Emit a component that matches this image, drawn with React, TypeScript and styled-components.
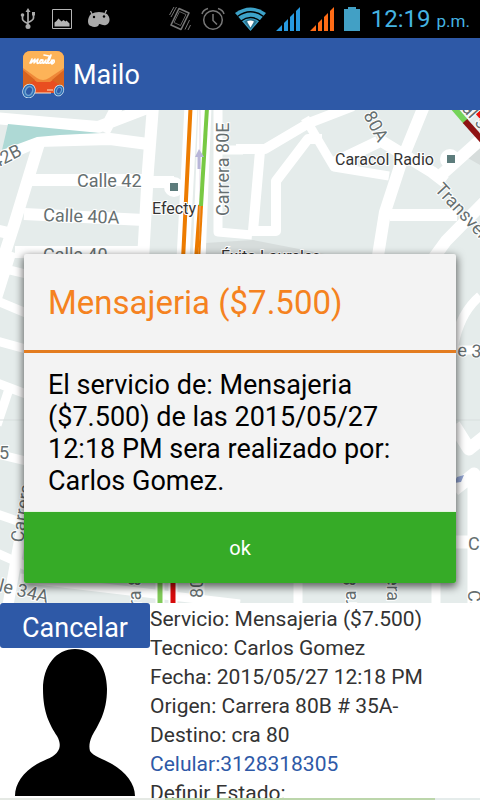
import React from "react";
import styled, { createGlobalStyle } from "styled-components";

const GlobalStyle = createGlobalStyle`
  * { box-sizing: border-box; }
  body { margin: 0; font-family: Roboto, sans-serif; background: #fff; }
  p, h1, h2 { margin: 0; }
`;

const Screen = styled.div`
  position: relative;
  display: flex;
  flex-direction: column;
  height: 100vh;
  overflow: hidden;
`;

const StatusBar = styled.header`
  display: flex;
  align-items: center;
  justify-content: space-between;
  flex: 0 0 38px;
  padding: 0 10px 0 20px;
  background: #000;
`;

const StatusGroup = styled.div<{ $gap: number }>`
  display: flex;
  align-items: center;
  gap: ${(p) => p.$gap}px;
`;

const Clock = styled.time`
  padding: 2px 0 0 1px;
  color: #45b4e2;
  font-size: 24px;
  line-height: 32px;
`;

const Meridiem = styled.span`
  margin-left: 6px;
  font-size: 17px;
`;

const AppBar = styled.div`
  display: flex;
  align-items: center;
  gap: 8px;
  flex: 0 0 72px;
  padding: 0 22px;
  background: #2e59a7;
  color: #fff;
`;

const AppTitle = styled.h1`
  padding-top: 2px;
  font-size: 27px;
  line-height: 36px;
  font-weight: 400;
`;

const Content = styled.main`
  position: relative;
  display: flex;
  flex: 1;
  flex-direction: column;
  justify-content: flex-end;
  min-height: 0;
  padding-bottom: 2px;
`;

const MapCanvas = styled.svg`
  position: absolute;
  inset: 0;
  width: 100%;
  height: 100%;
`;

const ServicePanel = styled.section`
  position: relative;
  display: flex;
  height: 195px;
  overflow: hidden;
  background: #fff;
`;

const TechnicianColumn = styled.div`
  display: flex;
  flex-direction: column;
  align-items: center;
  width: 150px;
`;

const CancelButton = styled.button`
  width: 100%;
  height: 45px;
  padding: 4px 0 0;
  border: 0;
  border-radius: 3px;
  background: #2e59a7;
  color: #fff;
  font: 400 27px/40px Roboto, sans-serif;
`;

const Details = styled.div`
  flex: 1;
  padding-top: 2px;
  color: #333;
  font-size: 21px;
  line-height: 29px;
  white-space: nowrap;
`;

const PhoneLink = styled.a`
  display: block;
  color: #2e59a7;
  text-decoration: none;
`;

const Overlay = styled.div`
  position: absolute;
  inset: 38px 0 0;
  display: flex;
  align-items: center;
  padding: 0 24px 1px;
`;

const Dialog = styled.section`
  width: 100%;
  border-radius: 2px;
  background: #f3f3f3;
  box-shadow: 0 3px 8px 1px rgba(0, 0, 0, 0.6);
  overflow: hidden;
`;

const DialogTitle = styled.h2`
  padding: 24px 24px 22px;
  border-bottom: 3px solid #e37c20;
  color: #f58220;
  font-size: 33px;
  line-height: 50px;
  font-weight: 400;
`;

const DialogText = styled.p`
  padding: 16px 24px 14px;
  color: #000;
  font-size: 27px;
  line-height: 32px;
`;

const OkButton = styled.button`
  display: block;
  width: 100%;
  height: 72px;
  border: 0;
  border-top: 1px solid #e6f5e0;
  background: #36ab27;
  color: #fff;
  font: 400 20px/24px Roboto, sans-serif;
`;

const UsbIcon = () => (
  <svg width="16" height="22" viewBox="0 0 16 22" fill="none" stroke="#aaa" strokeWidth="1.7">
    <path d="M8 3v15M2.500 7v4q0 2 5.500 4.500M13.500 6v4q0 2-5.500 4.500" />
    <path d="M8 0l2.500 4h-5z" fill="#aaa" stroke="none" />
    <circle cx="2.500" cy="7" r="1.800" fill="#aaa" stroke="none" />
    <path d="M12 4h3v3.500h-3z" fill="#aaa" stroke="none" />
    <circle cx="8" cy="18.500" r="2.500" fill="#aaa" stroke="none" />
  </svg>
);

const PictureIcon = () => (
  <svg width="20" height="20" viewBox="0 0 20 20">
    <path d="M.5.5h19v19H.5z" fill="none" stroke="#b5b5b5" />
    <path d="M2.500 17.500v-4l2-1.500 2-2.500 3 3 2-1.500 2 1.500 1-1 3 3v3z" fill="#b5b5b5" />
  </svg>
);

const DroidIcon = () => (
  <svg width="22" height="18" viewBox="0 0 22 18">
    <path d="M4 4L2.500 1M17 3.500L18.500 0" stroke="#aaa" strokeWidth="1.300" />
    <path d="M3 4q8-4 16 0c4 4 3 10-1 11-3 1-4-1-7-1 0 3-5 4-8 2C-1 15-1 8 3 4z" fill="#aaa" />
    <circle cx="6" cy="7" r="1.200" />
    <circle cx="16" cy="6.500" r="1.200" />
  </svg>
);

const VibrateIcon = () => (
  <svg width="22" height="26" viewBox="0 0 22 26" fill="none" stroke="#777">
    <path d="M10 2.500L20 7 12 23.500 2 19z" strokeWidth="1.600" strokeLinejoin="round" />
    <path d="M10.500 5.500L17 8.500 11.500 19.500 5 16.500z" strokeWidth=".8" />
    <path d="M5 1L.5 9M7.500 1L2 11M20.500 14L16 23.500M21.500 19L19 24" />
  </svg>
);

const AlarmIcon = () => (
  <svg width="24" height="24" viewBox="0 0 24 24" fill="none" stroke="#777" strokeWidth="1.500">
    <circle cx="12" cy="13" r="9.300" />
    <path d="M12 7v6.500l4 4M1 7q1-4 6-5.500M23 7q-1-4-6-5.500" />
  </svg>
);

const WifiIcon = () => (
  <svg width="31" height="24" viewBox="0 0 31 24">
    <path d="M0 6Q15.500-5 31 6L15.500 24z" fill="#3da2c8" />
    <path d="M2.500 9.500q13-9.500 26 0M6 14q9.500-7 19 0" fill="none" stroke="#000" strokeWidth="1.500" />
    <path d="M9 14.500q6.500-5 13 0l-6.500 8z" fill="#2b738f" />
    <path d="M12 14.500q3.500-2 7 0l-3.500 6z" fill="#fff" />
  </svg>
);

const SignalIcon = ({ color }: { color: string }) => (
  <svg width="24" height="24" viewBox="0 0 24 24" fill={color}>
    <path d="M0 24l6-6v6zM8 16l4-4v12H8zM14 10l4-4v18h-4zM20 4l4-4v24h-4z" />
  </svg>
);

const BatteryIcon = () => (
  <svg width="16" height="24" viewBox="0 0 16 24" fill="#42a0c5">
    <path d="M4 0h8v2h4v22H0V2h4z" />
  </svg>
);

const MailoLogo = () => (
  <svg width="43" height="48" viewBox="0 0 43 48">
    <rect x="1" y="1" width="41" height="42" rx="7" fill="#ef8737" />
    <path d="M1 22l14 10h13l14-10v14q0 7-7 7H8q-7 0-7-7z" fill="#e94e20" />
    <path d="M1 20l12 10L1 38zM42 20L30 30l12 8z" fill="#d9641f" />
    <path d="M1 18V9q0-8 8-8h25q8 0 8 8v9L27 28q-6 4-12 0z" fill="#fdb358" />
    <g fill="none" stroke="#fff" strokeWidth="1.600" strokeLinecap="round" strokeLinejoin="round">
      <path d="M8 13l2-4-1 4 4-4-1 4 4-4-1 4q1 1 3-1 0-3 3-2-4 0-3 3 2 1 3-3-1 4 1 3l2-3q-1 4 1 3 3-3 4-8-4 4-3 8 2 1 4-3-2 3 0 4 3-1 2-4-2 0-2 3" />
      <path d="M22 5l5 1" />
    </g>
    <path d="M13 43h16M25 40h6" stroke="#ffe3c5" />
    <g fill="#6fa3d0" stroke="#2d6fb4" strokeWidth="1.500">
      <ellipse cx="7" cy="41" rx="5" ry="6" stroke="#d6e7f2" strokeWidth="3" transform="rotate(25 7 41)" />
      <ellipse cx="7" cy="41" rx="5" ry="6" transform="rotate(25 7 41)" />
      <ellipse cx="37" cy="40.500" rx="3.500" ry="4.500" stroke="#d6e7f2" strokeWidth="3" transform="rotate(25 37 40.5)" />
      <ellipse cx="37" cy="40.500" rx="3.500" ry="4.500" transform="rotate(25 37 40.5)" />
    </g>
    <ellipse cx="7" cy="41" rx="2.700" ry="3.800" fill="#2e59a7" transform="rotate(25 7 41)" />
    <ellipse cx="37" cy="40.500" rx="1.800" ry="2.800" fill="#2e59a7" transform="rotate(25 37 40.5)" />
  </svg>
);

const Silhouette = () => (
  <svg width="122" height="148" viewBox="0 0 122 148" role="img" aria-label="Tecnico">
    <path d="M61 1C42 1 29 18 29 41c0 24 7 36 14 47 4 7 3 12 1 15-3 6-12 8-21 13C9 124 1 136 1 148h120c0-12-9-24-23-32-9-5-19-8-22-13-1-4-1-8 2-15 6-11 15-23 15-47C93 18 80 1 61 1z" />
  </svg>
);

const CityMap = () => (
  <MapCanvas viewBox="0 110 480 690" preserveAspectRatio="xMidYMid slice" role="img" aria-label="Mapa">
    <rect y="110" width="480" height="690" fill="#e5eceb" />
    <path d="M205 243l48-3 77 15v7H205zM466 157l14-10v18z" fill="#d7dddc" />
    <g fill="none" stroke="#fff" strokeWidth="12" strokeLinejoin="round">
      <path d="M-5 118L50 123l48 4 52-20M104 132l14-27" />
      <path d="M-5 160L38 141 110 139 148 144" />
      <path d="M40 140L14 225 2 262-5 290" />
      <path d="M153 106L148 170 143 260" />
      <path d="M30 180h115M24 214l120 6M15 252h130M150 182h24" />
      <path d="M-5 230l18 4" />
      <path d="M218 106v126l34 3M219 150h24" strokeWidth="9" />
      <path d="M236 149h29l44-26 44-17" strokeWidth="10" />
      <path d="M260 151L253 231h23V181l32-42h14" strokeWidth="10" />
      <path d="M305 118l29 49 55 9" strokeWidth="9" />
      <path d="M332 164l46-22M378 139l54 33 13 10M424 106L402 160 385 212 377 262M390 215h67M498 124L440 176M498 188l-52 53-16 22" />
    </g>
    <g fill="none" stroke="#fff" strokeWidth="9" strokeLinejoin="round">
      <path d="M12 252L-3 300M-3 267l29 7M-3 301l29 12M-3 341l29 8M-3 383l29 11M8 392L-3 425M-3 454l29 7M-3 514l29 10M-3 553l29 13" />
      <path d="M24 515L8 605" strokeWidth="11" />
      <path d="M20 578l220 26" />
      <path d="M454 345q6-32 26-49M454 350h30" />
      <path d="M454 425l15 24 15-12M454 490l20-16v130M450 542h20" strokeWidth="13" />
      <path d="M298 580v30M436 580v30M200 580v30" />
    </g>
    <path d="M0 420h30M450 420h30" stroke="#d8dfde" />
    <path d="M8 124L100 133 60 135 37 137 2 150z" fill="#aed9d5" />
    <path d="M191 106L183 260M205 106L199 260" stroke="#fff" strokeWidth="13" />
    <path d="M190.500 108L183 260M200 205L196 260" stroke="#ed7c00" strokeWidth="4" />
    <path d="M200 110V260" stroke="#d9c9dc" strokeWidth=".7" />
    <path d="M207 108L201 206" stroke="#78c943" strokeWidth="4" />
    <path d="M202 206L199 260" stroke="#ed7c00" strokeWidth="2" />
    <path d="M160 580v24M173 580v24" stroke="#fff" strokeWidth="9" />
    <path d="M160 580v24" stroke="#80ca58" strokeWidth="5" />
    <path d="M173 580v24" stroke="#d60b0b" strokeWidth="5" />
    <path d="M453 107l13 15" stroke="#75d359" strokeWidth="6" />
    <path d="M465 121l18 20" stroke="#8e1212" strokeWidth="6" />
    <path d="M478 112l6 7" stroke="#ee1010" strokeWidth="6" />
    <path d="M199 169v-13" stroke="#b8b6d8" strokeWidth="3" />
    <path d="M195 157l4-8 5 8z" fill="#b8b6d8" />
    <path d="M454 483l3-6 7-2-3 7z" fill="#8ea0cd" />
    <circle cx="174" cy="187" r="10" fill="#fff" />
    <path d="M170 183h8v8h-8z" fill="#5d7c7c" />
    <circle cx="450" cy="159" r="10" fill="#fff" />
    <path d="M447 155h8v8h-8z" fill="#5d7c7c" />
    <g fontFamily="Roboto, sans-serif" fontSize="18" fill="#666f70" stroke="#fff" strokeWidth="2" paintOrder="stroke">
      <text x="77" y="187">Calle 42</text>
      <text transform="translate(43 221) rotate(2)">Calle 40A</text>
      <text x="43" y="261">Calle 40</text>
      <text transform="translate(-5 169) rotate(-27)">42B</text>
      <text transform="translate(229 216) rotate(-90)">Carrera 80E</text>
      <text transform="translate(363 115) rotate(62)">80A</text>
      <text transform="translate(434 190) rotate(47)">Transversal</text>
      <text transform="translate(461 109) rotate(48)">al 5</text>
      <text x="-1" y="459">5</text>
      <text transform="translate(23 543) rotate(-81)">Carrera</text>
      <text transform="translate(-2 591) rotate(14)">le 34A</text>
      <text transform="translate(141 606) rotate(-90)">ra 8</text>
      <text transform="translate(203 598) rotate(-90)">80</text>
      <text transform="translate(356 606) rotate(-90)">ra 8</text>
      <text transform="translate(387 570) rotate(90)">rera</text>
      <text transform="translate(457 356) rotate(4)">e 3</text>
      <text x="468" y="550">C</text>
      <text transform="translate(468 590) rotate(90)">Ca</text>
    </g>
    <g fontFamily="Roboto, sans-serif" fontSize="16" fill="#333" stroke="#fff" strokeWidth="2" paintOrder="stroke">
      <text x="152" y="214">Efecty</text>
      <text x="335" y="165">Caracol Radio</text>
      <text x="221" y="262">Éxito Laureles</text>
    </g>
    <path d="M0 798h165v2H0z" fill="#e5e9e4" />
    <path d="M165 798h270v2H165z" fill="#bcd6ab" />
  </MapCanvas>
);

export default function App() {
  return (
    <Screen>
      <GlobalStyle />
      <StatusBar>
        <StatusGroup $gap={16}>
          <UsbIcon />
          <PictureIcon />
          <DroidIcon />
        </StatusGroup>
        <StatusGroup $gap={10}>
          <VibrateIcon />
          <AlarmIcon />
          <WifiIcon />
          <SignalIcon color="#2799df" />
          <SignalIcon color="#ff6c16" />
          <BatteryIcon />
          <Clock>
            12:19<Meridiem>p.m.</Meridiem>
          </Clock>
        </StatusGroup>
      </StatusBar>
      <AppBar>
        <MailoLogo />
        <AppTitle>Mailo</AppTitle>
      </AppBar>
      <Content>
        <CityMap />
        <ServicePanel>
          <TechnicianColumn>
            <CancelButton type="button">Cancelar</CancelButton>
            <Silhouette />
          </TechnicianColumn>
          <Details>
            <p>Servicio: Mensajeria ($7.500)</p>
            <p>Tecnico: Carlos Gomez</p>
            <p>Fecha: 2015/05/27 12:18 PM</p>
            <p>Origen: Carrera 80B # 35A-</p>
            <p>Destino: cra 80</p>
            <PhoneLink href="tel:3128318305">Celular:3128318305</PhoneLink>
            <p>Definir Estado:</p>
          </Details>
        </ServicePanel>
      </Content>
      <Overlay>
        <Dialog role="dialog" aria-modal="true" aria-labelledby="service-title">
          <DialogTitle id="service-title">Mensajeria ($7.500)</DialogTitle>
          <DialogText>
            El servicio de: Mensajeria ($7.500) de las 2015/05/27 12:18 PM sera realizado por: Carlos Gomez.
          </DialogText>
          <OkButton type="button">ok</OkButton>
        </Dialog>
      </Overlay>
    </Screen>
  );
}
